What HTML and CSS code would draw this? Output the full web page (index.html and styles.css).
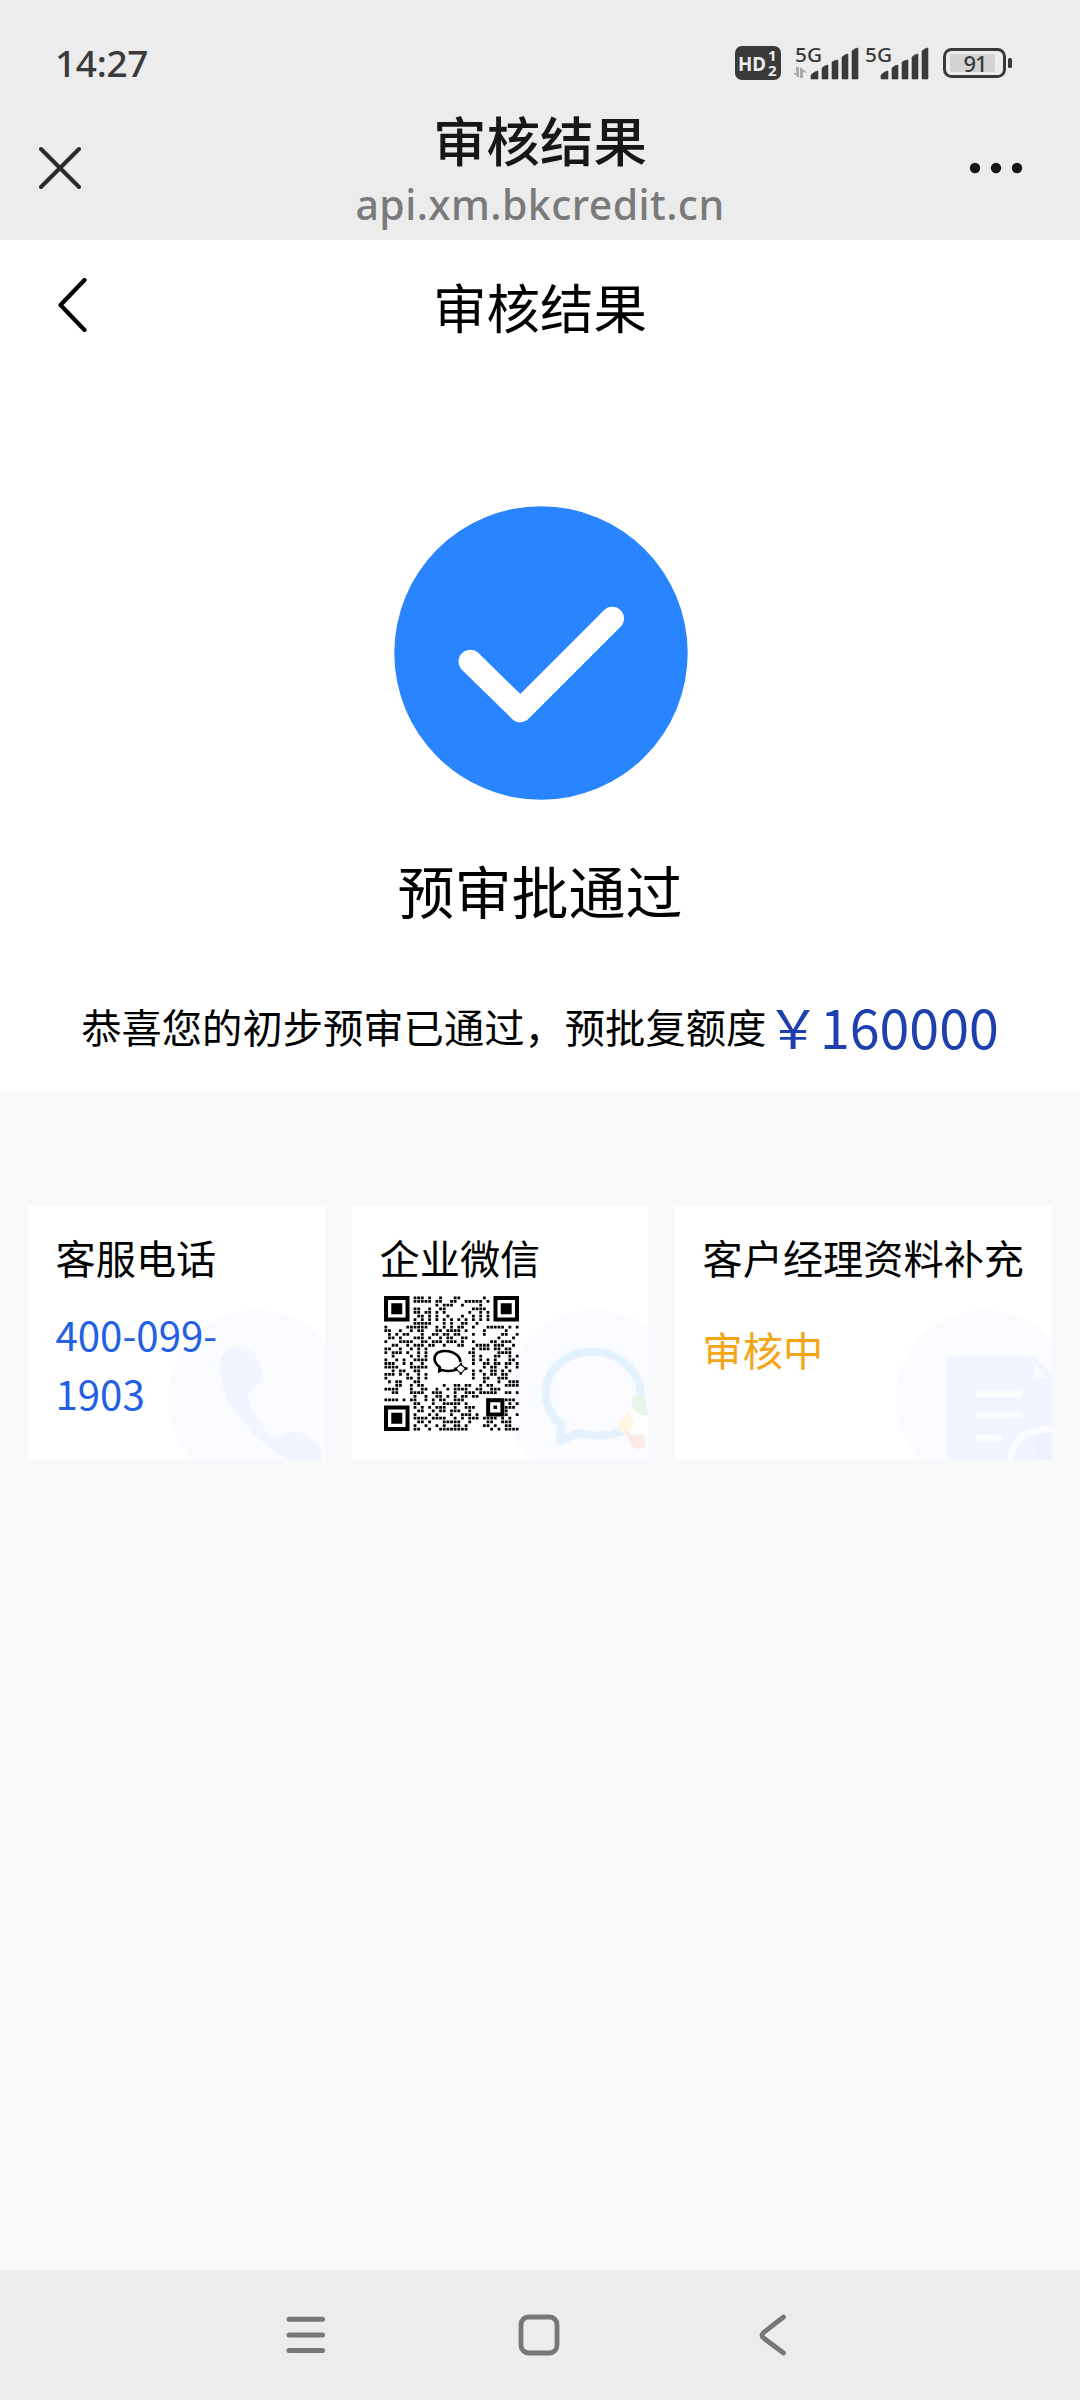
FILE: index.html
```html
<!DOCTYPE html>
<html lang="zh-CN">
<head>
<meta charset="utf-8">
<title>审核结果</title>
<link rel="stylesheet" href="styles.css">
</head>
<body>
<div class="screen">
  <header class="chrome">
    <div class="status">
      <span class="time">14:27</span>
      <svg class="signals" width="282" height="48" viewBox="0 -12 282 48" fill="#3a3a3a">
        <rect x="1" y="1" width="46" height="34" rx="7"/>
        <g fill="#ececec" font-weight="700">
          <text x="4" y="25.5" font-size="20" textLength="28" lengthAdjust="spacingAndGlyphs">HD</text>
          <text x="34" y="16" font-size="15">1</text>
          <text x="34" y="31" font-size="15">2</text>
        </g>
        <text x="61" y="16.5" font-size="20" font-weight="500" textLength="27" lengthAdjust="spacingAndGlyphs">5G</text>
        <path fill="#a9a9a9" d="M62 22h3v11l-6-5h3zM69 33h-3V22l7 5.500h-4z"/>
        <path id="bars" d="M77 34v-4q4-4 7-4v8zM88 34V23q3-3 6-3v14zM98 34V17q3-2 6-2v19zM108 34V12q3-3 6-3v25zM118 34V6q3-3 6-3v31z" stroke="#3a3a3a" stroke-linejoin="round" stroke-width=".6"/>
        <text x="131" y="16.5" font-size="20" font-weight="500" textLength="27" lengthAdjust="spacingAndGlyphs">5G</text>
        <use href="#bars" x="70"/>
        <rect x="210.500" y="4.500" width="60" height="27" rx="7" fill="none" stroke="#3a3a3a" stroke-width="3"/>
        <rect x="216" y="9" width="45" height="18" rx="2" fill="#d3d3d3"/>
        <text x="229.500" y="26.500" font-size="22" font-weight="500" textLength="24">91</text>
        <rect x="274" y="13" width="4" height="10" rx="1.500"/>
      </svg>
    </div>
    <div class="browser-bar">
      <svg class="close" width="42" height="44" viewBox="0 0 42 44"><path d="M2 3 40 41M40 3 2 41" stroke="#2b2b2b" stroke-width="4" stroke-linecap="round"/></svg>
      <div class="browser-title">
        <h1>审核结果</h1>
        <p>api.xm.bkcredit.cn</p>
      </div>
      <svg class="more" width="54" height="12" viewBox="0 0 54 12" fill="#171717"><circle cx="6" cy="6" r="5.200"/><circle cx="27" cy="6" r="5.200"/><circle cx="48" cy="6" r="5.200"/></svg>
    </div>
  </header>

  <main>
    <section class="result">
      <div class="page-bar">
        <svg class="back" width="30" height="54" viewBox="0 0 30 54"><path d="M27.500 2 3.500 27l24 25" fill="none" stroke="#000" stroke-width="4.200" stroke-linecap="round" stroke-linejoin="round"/></svg>
        <h2>审核结果</h2>
      </div>
      <svg class="check" width="294" height="294" viewBox="0 0 294 294"><circle cx="147" cy="147" r="146.700" fill="#2885ff"/><path d="M76.300 155.500 126.300 204.500 218.300 112.500" fill="none" stroke="#fff" stroke-width="23.500" stroke-linecap="round" stroke-linejoin="round"/></svg>
      <h3>预审批通过</h3>
      <p class="message">恭喜您的初步预审已通过，预批复额度<span class="amount">￥160000</span></p>
    </section>

    <section class="cards">
      <article class="card">
        <h4>客服电话</h4>
        <a class="phone">400-099-<br>1903</a>
        <svg class="art" width="160" height="152" viewBox="0 0 160 152">
          <circle cx="92" cy="91" r="89" fill="#fafbff"/>
          <path d="M62 43C71 35 88 38 94 53C98 65 99 75 88 81C82 85 82 91 86 98L99 120C104 128 110 131 118 127C129 120 141 125 150 134C159 144 156 151 153 155H133C98 145 58 98 55 66C54 55 55 48 62 43Z" fill="#f2f5ff"/>
        </svg>
      </article>
      <article class="card">
        <h4>企业微信</h4>
        <svg class="qr" width="135" height="135" viewBox="0 0 37 37">
          <g id="modules"></g>
          <path fill-rule="evenodd" d="M0 0h7v7H0zM1.100 1.100v4.800h4.800V1.100zM2 2h3v3H2zM30 0h7v7h-7zM31.100 1.100v4.800h4.800V1.100zM32 2h3v3h-3zM0 30h7v7H0zM1.100 31.100v4.800h4.800v-4.800zM2 32h3v3H2zM28 28h5v5h-5zM29.100 29.100v2.800h2.800v-2.800zM30 30h1v1h-1z"/>
          <path d="M20.500 20.200C18.900 20.800 17.500 20.700 16.500 20.400L15.900 20.700 16 19.600C13.700 17.700 14.600 15.300 17.100 15.200C19.500 15.100 21.300 16.600 21.200 18.200" fill="none" stroke="#000" stroke-width=".7" transform="translate(-2 -.1) scale(1.080 1)"/>
          <path d="m21 18.700 1.400 1.200-1.300 1.300-1.500-1.200z" fill="none" stroke="#000" stroke-width=".3"/>
          <path d="M20.800 18.300h.6v.7h-.6zM22.100 19.500h.8v.7h-.8zM20.700 20.900h.7v.7h-.7zM19.200 19.600h.8v.7h-.8z"/>
        </svg>
        <svg class="art" width="140" height="152" viewBox="0 0 140 152">
          <circle cx="87" cy="91" r="89" fill="#fafbfe"/>
          <path d="M113 124C101 128 84 129 70 125L52 133 53 116C32 99 31 66 59 50C91 33 131 52 133 87" fill="none" stroke="#e4f2fe" stroke-width="8" stroke-linecap="round" stroke-linejoin="round"/>
          <circle cx="133" cy="113" r="13" fill="#fff"/>
          <path d="M123 91Q131 84 138 91L140 107Q129 109 124 98Z" fill="#e6f5e8"/>
          <path d="M109 114Q117 111 121 103L126 116 119 127Q111 125 109 114Z" fill="#fdf7e2"/>
          <path d="M116 122Q126 130 134 126Q140 134 135 140Q128 144 123 136Z" fill="#fdece6"/>
        </svg>
      </article>
      <article class="card wide">
        <h4>客户经理资料补充</h4>
        <p class="pending">审核中</p>
        <svg class="art" width="160" height="152" viewBox="0 0 160 152">
          <circle cx="93" cy="91" r="89" fill="#fafbff"/>
          <path d="M60 48h82l18 20v87H55V53q0-5 5-5z" fill="#f2f5ff"/>
          <path d="m142 55 14 15h-10q-4 0-4-4z" fill="#fafbff"/>
          <path d="M87 86h40M87 107h40M87 130h20" stroke="#fafcff" stroke-width="7" stroke-linecap="round"/>
          <path d="M118 155C119 133 132 121 160 121" fill="none" stroke="#fafcff" stroke-width="7"/>
          <path d="M144 126h16v28h-16q-4-5 1-10-6-9-1-18z" fill="#edf2ff"/>
        </svg>
      </article>
    </section>
  </main>

  <nav class="system-nav">
    <svg width="40" height="42" viewBox="0 0 40 42"><path d="M3 5.300h33.500M3 21h33.500M3 36.400h33.500" stroke="#777" stroke-width="5" stroke-linecap="round"/></svg>
    <svg class="home" width="42" height="42" viewBox="0 0 42 42"><rect x="3" y="3" width="36" height="36" rx="7.500" fill="none" stroke="#777" stroke-width="4.800"/></svg>
    <svg width="28" height="42" viewBox="0 0 28 42"><path d="M24.500 3 4.500 18.500Q1.500 21.300 4.500 24L24.500 39" fill="none" stroke="#777" stroke-width="4.800" stroke-linecap="round"/></svg>
  </nav>
</div>
<script src="qr.js"></script>
</body>
</html>
```
FILE: styles.css
```css
* { box-sizing: border-box; margin: 0; padding: 0; }

body {
  width: 1080px;
  font-family: "Noto Sans CJK SC", sans-serif;
  color: #000;
}

svg { display: block; flex: none; }

.screen {
  display: flex;
  flex-direction: column;
  height: 2400px;
  background: #f7f9fb;
}

.chrome { height: 240px; background: #ececec; }

.status {
  display: flex;
  justify-content: space-between;
  align-items: flex-start;
  height: 100px;
  padding: 33px 64px 0 55px;
  color: #3a3a3a;
}

.time {
  margin-top: 8px;
  font: 500 37px/44px "Noto Sans", sans-serif;
  letter-spacing: -0.3px;
}

.signals { font-family: "Noto Sans", sans-serif; }

.browser-bar {
  display: grid;
  grid-template-columns: 120px 1fr 120px;
  height: 140px;
}

.close { margin: 46px 0 0 39px; }
.more { margin: 62px 0 0 9px; }

.browser-title { padding-top: 12px; text-align: center; }

.browser-title h1 {
  color: #171717;
  font-size: 53.5px;
  font-weight: 500;
  line-height: 54px;
}

.browser-title p {
  margin-top: 11px;
  color: #7a7a7a;
  font: 500 41px/54px "Noto Sans", sans-serif;
  letter-spacing: 0.45px;
}

.result {
  display: flex;
  flex-direction: column;
  align-items: center;
  height: 851px;
  background: #fff;
}

.page-bar {
  display: grid;
  grid-template-columns: 120px 1fr 120px;
  width: 100%;
  height: 266px;
}

.back { margin: 38px 0 0 57px; }

.page-bar h2 {
  padding-top: 39px;
  font-size: 53.5px;
  font-weight: 400;
  line-height: 54px;
  text-align: center;
}

.check { margin-left: 2px; }

.result h3 {
  margin-top: 59px;
  font-size: 57px;
  font-weight: 400;
  line-height: 60px;
}

.message {
  display: flex;
  align-items: center;
  margin-top: 77px;
  font-size: 40.3px;
  line-height: 60px;
  white-space: nowrap;
}

.amount { color: #1e40af; font-size: 53.7px; }

.cards {
  display: grid;
  grid-template-columns: 297px 296px 377px;
  gap: 27px;
  padding: 115px 28px 0;
}

.card {
  position: relative;
  height: 254px;
  padding: 22px 0 0 27.5px;
  overflow: hidden;
  background: #fff;
}

.card h4 {
  position: relative;
  z-index: 1;
  font-size: 40.2px;
  font-weight: 400;
  line-height: 58px;
  white-space: nowrap;
}

.phone {
  position: relative;
  z-index: 1;
  display: block;
  margin-top: 18px;
  color: #2461e2;
  font-size: 40.2px;
  line-height: 59px;
}

.pending {
  margin-top: 34px;
  color: #f5a414;
  font-size: 40.2px;
  line-height: 58px;
}

.qr { position: relative; z-index: 1; margin: 10px 0 0 4px; }

.art { position: absolute; right: 0; bottom: 0; }

.system-nav {
  display: flex;
  align-items: center;
  height: 130px;
  margin-top: auto;
  padding-left: 286px;
  background: #ececec;
}

.home { margin: 0 199px 0 192px; }
```
FILE: qr.js
```js
// Dot columns of each QR row; the finder squares and logo are drawn in the markup.
const rows = [
  "........###.#..#...##......#.........",
  "........#####.##..##..#####.#........",
  "..............#.###..#....#..........",
  "........##..#..##.......####.........",
  "........##.##.#.#......#..#.#........",
  ".........##.#.#..#...#..#.#.#........",
  "........#.#.#.#.#.#.#.#.#.#.#........",
  "........#####...#.#..##..#...........",
  "#.....######..#.#.#.##..#...#####.#.#",
  "##..#..#.##...##.####.#....#.....#...",
  ".#.#.##...#..##.##.##...#..#....##..#",
  ".##.#...###.#..#.##..##........#...#.",
  "#...####..##.###.###.#..#....##.###..",
  "..##..#.###.##..#...##...####.###..#.",
  "##..#..#.#.#............#.###.##.##..",
  "#.###.#..#.#...........##......####..",
  "..#....#.#.#............#.#...##..#.#",
  "#..#.#..####............#.#.#.#...##.",
  "###..#.#..#.............#..##.##.##.#",
  "####...#####...............#.##..#..#",
  "..#.##..##..............#.#..##.#.#..",
  "###.#.#..#.#............#..#.##.##...",
  "#.....##.#.#............#..##..###...",
  ".#.##...##.................#...#..###",
  "...##..#.##.....#..##.##..#.##...####",
  "####...#..##..#..#.####..##..###.....",
  "..##...####..###...#..###.#####..##.#",
  "........#..#..##.#.#.##.##...........",
  "####.#.##..#.#.##..###......#.##.###.",
  "........##...#..#####.#...........#.#",
  "........#.#.#.###..#..###........###.",
  ".........##..#.##.###..#.........#...",
  "........#...#.#...#..###.#......##..#",
  "........####.####..#.#.###.####.#.#..",
  ".........##.#...#####..#....##..###..",
  "........#..#..#.#..##.#....##.#..##..",
  "........##..#..########......#.#.####"
];
const svgNs = "http://www.w3.org/2000/svg";
const path = document.createElementNS(svgNs, "path");
let d = "";
rows.forEach((row, y) => {
  [...row].forEach((cell, x) => {
    if (cell === "#") d += `M${x + 0.12} ${y + 0.12}h.76v.76h-.76z`;
  });
});
path.setAttribute("d", d);
document.getElementById("modules").append(path);
```
